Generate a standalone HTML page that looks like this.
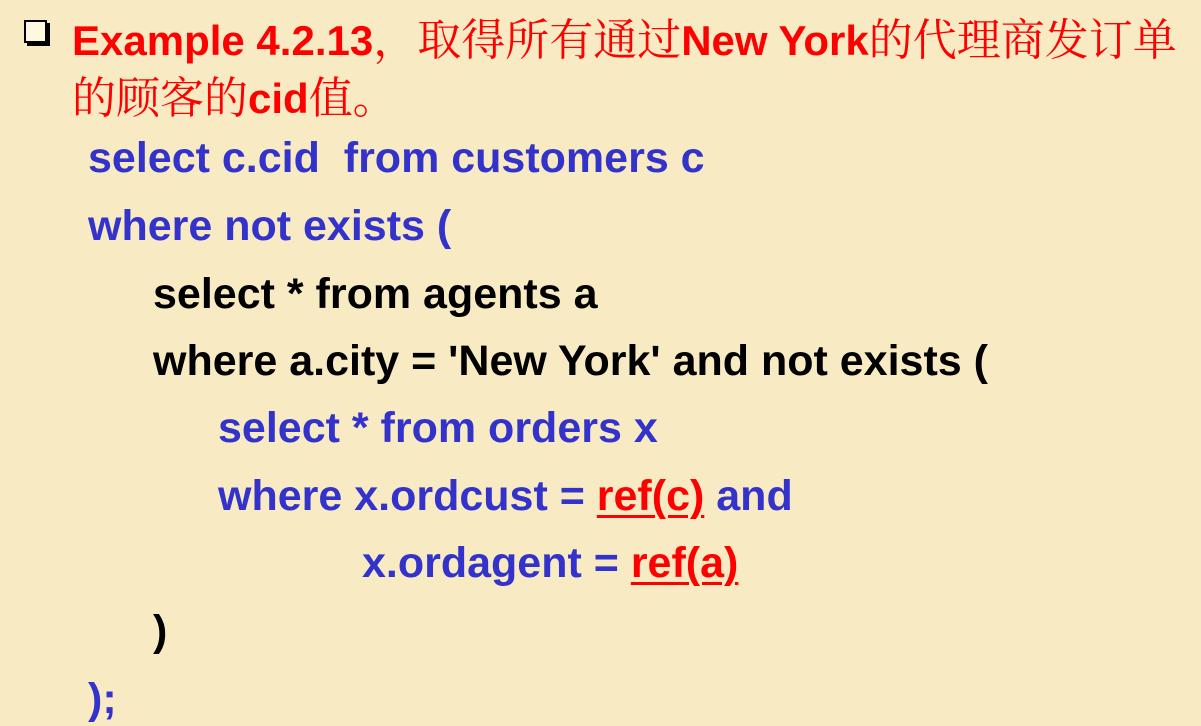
<!DOCTYPE html>
<html><head><meta charset="utf-8"><style>
html,body{margin:0;padding:0}
body{width:1201px;height:726px;overflow:hidden;position:relative;
background:#f8ebc3;
font-family:"Liberation Sans","Noto Sans CJK SC",sans-serif;}
.t{position:absolute;white-space:pre;font-weight:bold;line-height:1}
.h{color:#ff0000;font-size:42px}
.zh{font-family:"Noto Serif CJK SC","Noto Sans CJK SC",serif;font-weight:normal;font-size:44px}
.c{font-size:43px}
.b{color:#3333cc}.k{color:#000}.r{color:#ff0000;text-decoration:underline;text-decoration-thickness:3px;text-underline-offset:5px}
.box{position:absolute;left:24px;top:20px;width:19px;height:19px;border:2px solid #000;box-shadow:3px 3px 0 #000;background:#fff8e0}
</style></head><body>
<div class="box"></div>
<div class="t h" style="left:72px;top:14px">Example 4.2.13<span class="zh">，取得所有通过</span>New York<span class="zh">的代理商发订单</span></div>
<div class="t h" style="left:72px;top:72px"><span class="zh">的顾客的</span>cid<span class="zh">值。</span></div>
<div class="t c b" style="left:88px;top:137px">select c.cid  from customers c</div>
<div class="t c b" style="left:88px;top:205px">where not exists (</div>
<div class="t c k" style="left:153px;top:273px">select * from agents a</div>
<div class="t c k" style="left:153px;top:340px">where a.city = 'New York' and not exists (</div>
<div class="t c b" style="left:218px;top:407px">select * from orders x</div>
<div class="t c b" style="left:218px;top:475px">where x.ordcust = <span class="r">ref(c)</span> and</div>
<div class="t c b" style="left:362px;top:542px">x.ordagent = <span class="r">ref(a)</span></div>
<div class="t c k" style="left:153px;top:610px">)</div>
<div class="t c b" style="left:88px;top:678px">);</div>
</body></html>
